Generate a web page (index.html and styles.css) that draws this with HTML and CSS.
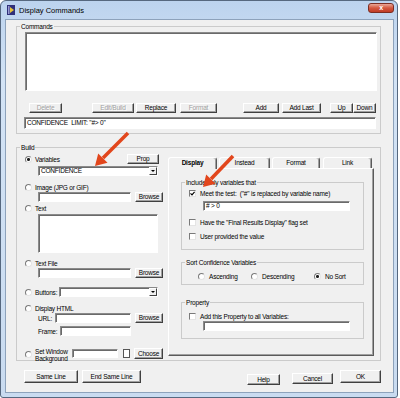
FILE: index.html
```html
<!DOCTYPE html>
<html lang="en">
<head>
  <meta charset="UTF-8">
  <meta name="viewport" content="width=device-width, initial-scale=1.0">
  <title>Display Commands</title>
  <link rel="stylesheet" href="styles.css">
</head>
<body>
  <div class="window">
    <!-- Title bar -->
    <div class="titlebar">
      <svg class="app-icon" width="8" height="10" viewBox="0 0 8 10">
        <rect width="8" height="10" fill="#30307a"/>
        <rect x="1" y="1" width="1.5" height="8" fill="#9a9ad0"/>
        <polygon points="3,2 7,5 3,8" fill="#e6c23a"/>
      </svg>
      <span class="title">Display Commands</span>
      <span class="close">x</span>
    </div>

    <div class="client">
      <!-- Commands -->
      <fieldset class="group commands">
        <legend>Commands</legend>
        <div class="field cmd-list"></div>
        <div class="cmd-buttons">
          <button class="btn b-delete" disabled>Delete</button>
          <button class="btn b-edit" disabled>Edit/Build</button>
          <button class="btn b-replace">Replace</button>
          <button class="btn b-format" disabled>Format</button>
          <button class="btn b-add">Add</button>
          <button class="btn b-addlast">Add Last</button>
          <button class="btn b-up">Up</button>
          <button class="btn b-down">Down</button>
        </div>
        <div class="field cmd-line">CONFIDENCE&nbsp; LIMIT: "#&gt; 0"</div>
      </fieldset>

      <!-- Build -->
      <fieldset class="group build">
        <legend>Build</legend>
        <div class="build-body">
          <div class="build-left">
            <div class="opt opt-var">
              <span class="radio on"></span><span class="lbl">Variables</span>
              <button class="btn b-prop">Prop</button>
            </div>
            <div class="combo combo-var"><span class="combo-text">CONFIDENCE</span><span class="combo-btn"></span></div>

            <div class="opt opt-image"><span class="radio"></span><span class="lbl">Image (JPG or GIF)</span></div>
            <div class="file-row file-image">
              <div class="field file-path"></div>
              <button class="btn b-browse">Browse</button>
            </div>

            <div class="opt opt-text"><span class="radio"></span><span class="lbl">Text</span></div>
            <div class="field text-box"></div>

            <div class="opt opt-textfile"><span class="radio"></span><span class="lbl">Text File</span></div>
            <div class="file-row file-text">
              <div class="field file-path"></div>
              <button class="btn b-browse">Browse</button>
            </div>

            <div class="opt opt-buttons">
              <span class="radio"></span><span class="lbl">Buttons:</span>
              <div class="combo combo-buttons"><span class="combo-text"></span><span class="combo-btn"></span></div>
            </div>

            <div class="opt opt-html"><span class="radio"></span><span class="lbl">Display HTML</span></div>
            <div class="sub-row url-row">
              <span class="sub-lbl lbl-url">URL:</span>
              <div class="field url-field"></div>
              <button class="btn b-browse">Browse</button>
            </div>
            <div class="sub-row frame-row">
              <span class="sub-lbl lbl-frame">Frame:</span>
              <div class="field frame-field"></div>
            </div>

            <div class="opt opt-bg">
              <span class="radio"></span>
              <span class="lbl lbl-2">Set Window<br>Background</span>
              <div class="field bg-field"></div>
              <span class="swatch"></span>
              <button class="btn b-choose">Choose</button>
            </div>
          </div>

          <div class="tabs">
            <div class="tab-strip">
              <span class="tab tab-display active">Display</span>
              <span class="tab tab-instead">Instead</span>
              <span class="tab tab-format">Format</span>
              <span class="tab tab-link">Link</span>
            </div>
            <div class="tab-panel">
              <fieldset class="group sub include">
                <legend>Include only variables that</legend>
                <div class="chk-row">
                  <span class="check"><svg width="5" height="5" viewBox="0 0 5 5"><path d="M0.5 2.3 L2 3.8 L4.6 0.8" fill="none" stroke="#000" stroke-width="1.2"/></svg></span>
                  <span class="lbl">Meet the test:&nbsp; ("#" is replaced by variable name)</span>
                </div>
                <div class="field test-field"># &gt; 0</div>
                <div class="chk-row row-final">
                  <span class="check"></span>
                  <span class="lbl">Have the "Final Results Display" flag set</span>
                </div>
                <div class="chk-row row-user">
                  <span class="check"></span>
                  <span class="lbl">User provided the value</span>
                </div>
              </fieldset>

              <fieldset class="group sub sort">
                <legend>Sort Confidence Variables</legend>
                <div class="sort-row">
                  <span class="sort-opt asc"><span class="radio"></span><span class="lbl">Ascending</span></span>
                  <span class="sort-opt desc"><span class="radio"></span><span class="lbl">Descending</span></span>
                  <span class="sort-opt none"><span class="radio on"></span><span class="lbl">No Sort</span></span>
                </div>
              </fieldset>

              <fieldset class="group sub property">
                <legend>Property</legend>
                <div class="chk-row">
                  <span class="check"></span>
                  <span class="lbl">Add this Property to all Variables:</span>
                </div>
                <div class="field prop-field"></div>
              </fieldset>
            </div>
          </div>
        </div>
      </fieldset>

      <!-- Dialog buttons -->
      <div class="footer">
        <button class="btn b-sameline">Same Line</button>
        <button class="btn b-endsame">End Same Line</button>
        <button class="btn b-help">Help</button>
        <button class="btn b-cancel">Cancel</button>
        <button class="btn b-ok">OK</button>
      </div>
    </div>
  </div>

  <!-- Annotation arrows -->
  <svg class="arrows" width="400" height="398" viewBox="0 0 400 398">
    <line x1="128" y1="133" x2="103" y2="158" stroke="#e2461c" stroke-width="3.6"/>
    <polygon points="95,166 107.5,162.8 98.2,153.5" fill="#e2461c"/>
    <line x1="233" y1="156" x2="211" y2="179" stroke="#e2461c" stroke-width="3.6"/>
    <polygon points="203,187 215.5,183.8 206.2,174.5" fill="#e2461c"/>
  </svg>
</body>
</html>
```

FILE: styles.css
```css
/* General */
* {
  box-sizing: border-box;
}

body {
  margin: 0;
  background: #fff;
  font-family: "Liberation Sans", Arial, sans-serif;
  font-size: 6.5px;
  letter-spacing: -0.2px;
  line-height: 9px;
  color: #000;
  position: relative;
}

/* Window frame */
.window {
  width: 398px;
  height: 398px;
  border: 1px solid #56687f;
  border-radius: 6px 6px 3px 3px;
  background: linear-gradient(#bcd3ee, #d3e3f5 80px, #c9dbf0);
}

.titlebar {
  height: 18px;
  display: flex;
  align-items: center;
  padding: 0 3px 0 6px;
}

.app-icon {
  margin-right: 4px;
  flex: none;
}

.title {
  flex: 1;
  font-size: 7.5px;
  letter-spacing: 0;
}

.close {
  align-self: flex-start;
  margin-top: 2px;
  width: 26px;
  height: 10px;
  border: 1px solid #7c2d22;
  border-radius: 3px;
  background: linear-gradient(#e9a797, #d4583f 50%, #c03c27);
  color: #fff;
  font: bold 7px/8px "Liberation Sans", sans-serif;
  text-align: center;
}

.client {
  margin: 0 3px 4px 4px;
  height: 374px;
  border: 1px solid #8da2bb;
  background: #f0f0f0;
}

/* Group boxes */
.group {
  margin: 0;
  padding: 0;
  min-width: 0;
  border: 1px solid #cbcbcb;
}

.group legend {
  padding: 0 1px;
  line-height: 9px;
}

/* Controls */
.btn {
  font: inherit;
  letter-spacing: inherit;
  padding: 0;
  height: 10px;
  line-height: 8px;
  color: #000;
  background: #f0f0f0;
  border: 1px solid;
  border-color: #fff #404040 #404040 #fff;
  box-shadow: inset -1px -1px #a0a0a0;
  flex: none;
}

.btn:disabled {
  color: #a0a0a0;
  text-shadow: 1px 1px 0 #fff;
}

.field {
  background: #fff;
  border: 1px solid;
  border-color: #8a8a8a #fff #fff #8a8a8a;
  box-shadow: inset 1px 1px #6a6a6a;
  padding-left: 2px;
  flex: none;
}

.radio {
  width: 7px;
  height: 7px;
  border-radius: 50%;
  border: 1px solid;
  border-color: #7a7a7a #e4e4e4 #e4e4e4 #7a7a7a;
  background: #fff;
  flex: none;
}

.radio.on {
  background: radial-gradient(circle, #1e1e1e 1.2px, #fff 1.8px);
}

.check {
  width: 7px;
  height: 7px;
  border: 1px solid;
  border-color: #7a7a7a #e4e4e4 #e4e4e4 #7a7a7a;
  background: #fff;
  flex: none;
  display: flex;
}

.combo {
  display: flex;
  height: 10px;
  background: #fff;
  border: 1px solid;
  border-color: #8a8a8a #fff #fff #8a8a8a;
  box-shadow: inset 1px 1px #6a6a6a;
}

.combo-text {
  flex: 1;
  padding-left: 2px;
  line-height: 8px;
}

.combo-btn {
  width: 8px;
  height: 8px;
  background: #f0f0f0;
  border: 1px solid;
  border-color: #fff #404040 #404040 #fff;
  display: flex;
  align-items: center;
  justify-content: center;
}

.combo-btn::after {
  content: "";
  border-left: 2px solid transparent;
  border-right: 2px solid transparent;
  border-top: 2px solid #000;
}

/* Commands */
.commands {
  margin: 2px 12px 0 10px;
  padding: 1px 3px 4px 8px;
}

.commands legend,
.build legend {
  margin-left: -5px;
}

.cmd-list {
  height: 59px;
}

.cmd-buttons {
  display: flex;
  margin-top: 12px;
}

.b-delete { margin-left: 4px; width: 33px; }
.b-edit { margin-left: 30px; width: 42px; }
.b-replace { margin-left: 2px; width: 40px; }
.b-format { margin-left: 4px; width: 37px; }
.b-add { margin-left: 26px; width: 36px; }
.b-addlast { margin-left: 3px; width: 39px; }
.b-up { margin-left: 9px; width: 23px; }
.b-down { width: 23px; }

.cmd-line {
  margin: 4px 0 0 -1px;
  height: 12px;
  line-height: 10px;
  width: 352px;
}

/* Build */
.build {
  margin: 9px 12px 0 10px;
  padding: 2px 3px 1px 8px;
}

.build-body {
  display: flex;
  align-items: flex-start;
}

.build-left {
  width: 138px;
  flex: none;
}

.opt {
  display: flex;
  align-items: center;
  height: 9px;
}

.opt .lbl {
  margin-left: 3px;
  white-space: nowrap;
}

.opt-var { height: 10px; }
.b-prop { margin-left: auto; margin-right: 4px; width: 32px; }

.combo-var {
  margin: 2px 0 0 13px;
  width: 120px;
}

.opt-image { margin-top: 7px; }

.file-row {
  display: flex;
  height: 10px;
  padding-left: 13px;
}

.file-path { width: 93px; height: 10px; }
.b-browse { margin-left: 4px; width: 28px; }

.opt-text { margin-top: 2px; }

.text-box {
  margin: 1px 0 0 13px;
  width: 120px;
  height: 39px;
}

.opt-textfile { margin-top: 6px; }

.opt-buttons {
  margin-top: 9px;
  height: 10px;
}

.combo-buttons {
  margin-left: auto;
  margin-right: 5px;
  width: 99px;
}

.opt-html { margin-top: 7px; }

.sub-row {
  display: flex;
  align-items: center;
  height: 10px;
  padding-left: 13px;
}

.sub-row .field { height: 10px; }
.lbl-url { width: 17px; }
.lbl-frame { width: 22px; }
.url-field { width: 76px; }
.frame-field { width: 71px; }
.frame-row { margin-top: 3px; }

.opt-bg {
  margin-top: 12px;
  height: 11px;
}

.opt-bg .radio {
  align-self: flex-start;
  margin-top: 3px;
}

.lbl-2 {
  width: 37px;
  line-height: 7px;
  margin-top: 2px;
}

.bg-field { width: 46px; height: 9px; }

.swatch {
  margin-left: 5px;
  width: 7px;
  height: 9px;
  background: #fff;
  border: 1px solid #555;
}

.b-choose { margin-left: 4px; width: 29px; height: 11px; }

/* Tabs */
.tabs {
  margin: 3px 0 0 5px;
  width: 206px;
  flex: none;
}

.tab-strip {
  display: flex;
  align-items: flex-end;
  height: 11px;
}

.tab {
  height: 11px;
  line-height: 9px;
  text-align: center;
  border: 1px solid;
  border-bottom: none;
  border-color: #fff #5a5a5a #fff #fff;
  border-radius: 3px 3px 0 0;
  box-shadow: inset -1px 0 #a0a0a0;
}

.tab.active {
  font-weight: bold;
  height: 12px;
  margin-bottom: -1px;
  background: #f0f0f0;
  position: relative;
  z-index: 1;
}

.tab-display { width: 49px; }
.tab-instead { margin-left: 2px; width: 51px; }
.tab-format { margin-left: 2px; width: 48px; }
.tab-link { margin-left: 3px; width: 49px; }

.tab-panel {
  height: 188px;
  padding: 9px 9px 0 12px;
  border: 1px solid;
  border-color: #fff #5a5a5a #5a5a5a #fff;
  box-shadow: inset -1px -1px #a0a0a0;
}

.group.sub {
  padding: 2px 4px 8px 7px;
}

.group.sub legend {
  margin-left: -4px;
}

.chk-row {
  display: flex;
  align-items: center;
  height: 9px;
}

.chk-row .lbl {
  margin-left: 4px;
}

.test-field {
  margin: 3px 0 0 14px;
  width: 147px;
  height: 10px;
  line-height: 8px;
}

.row-final { margin-top: 7px; }
.row-user { margin-top: 5px; }

.group.sort {
  margin-top: 8px;
  padding: 5px 4px 3px 7px;
}

.sort-row {
  display: flex;
  height: 9px;
  padding-left: 9px;
}

.sort-opt {
  display: flex;
  align-items: center;
}

.sort-opt .lbl { margin-left: 4px; }
.sort-opt.asc { width: 53px; }
.sort-opt.desc { width: 63px; }

.group.property {
  margin-top: 13px;
  padding: 5px 4px 7px 7px;
}

.prop-field {
  margin-left: 14px;
  width: 147px;
  height: 10px;
}

/* Footer */
.footer {
  display: flex;
  align-items: flex-start;
  margin-top: 9px;
  padding-left: 18px;
}

.footer .btn {
  height: 13px;
  line-height: 11px;
}

.b-sameline { width: 54px; }
.b-endsame { margin-left: 4px; width: 59px; }
.footer .b-help { margin: 4px 0 0 106px; width: 33px; height: 11px; line-height: 9px; }
.footer .b-cancel { margin: 3px 0 0 12px; width: 41px; height: 11px; line-height: 9px; }
.b-ok { margin-left: 7px; width: 41px; }

/* Annotation overlay */
.arrows {
  position: absolute;
  top: 0;
  left: 0;
  pointer-events: none;
}
```
